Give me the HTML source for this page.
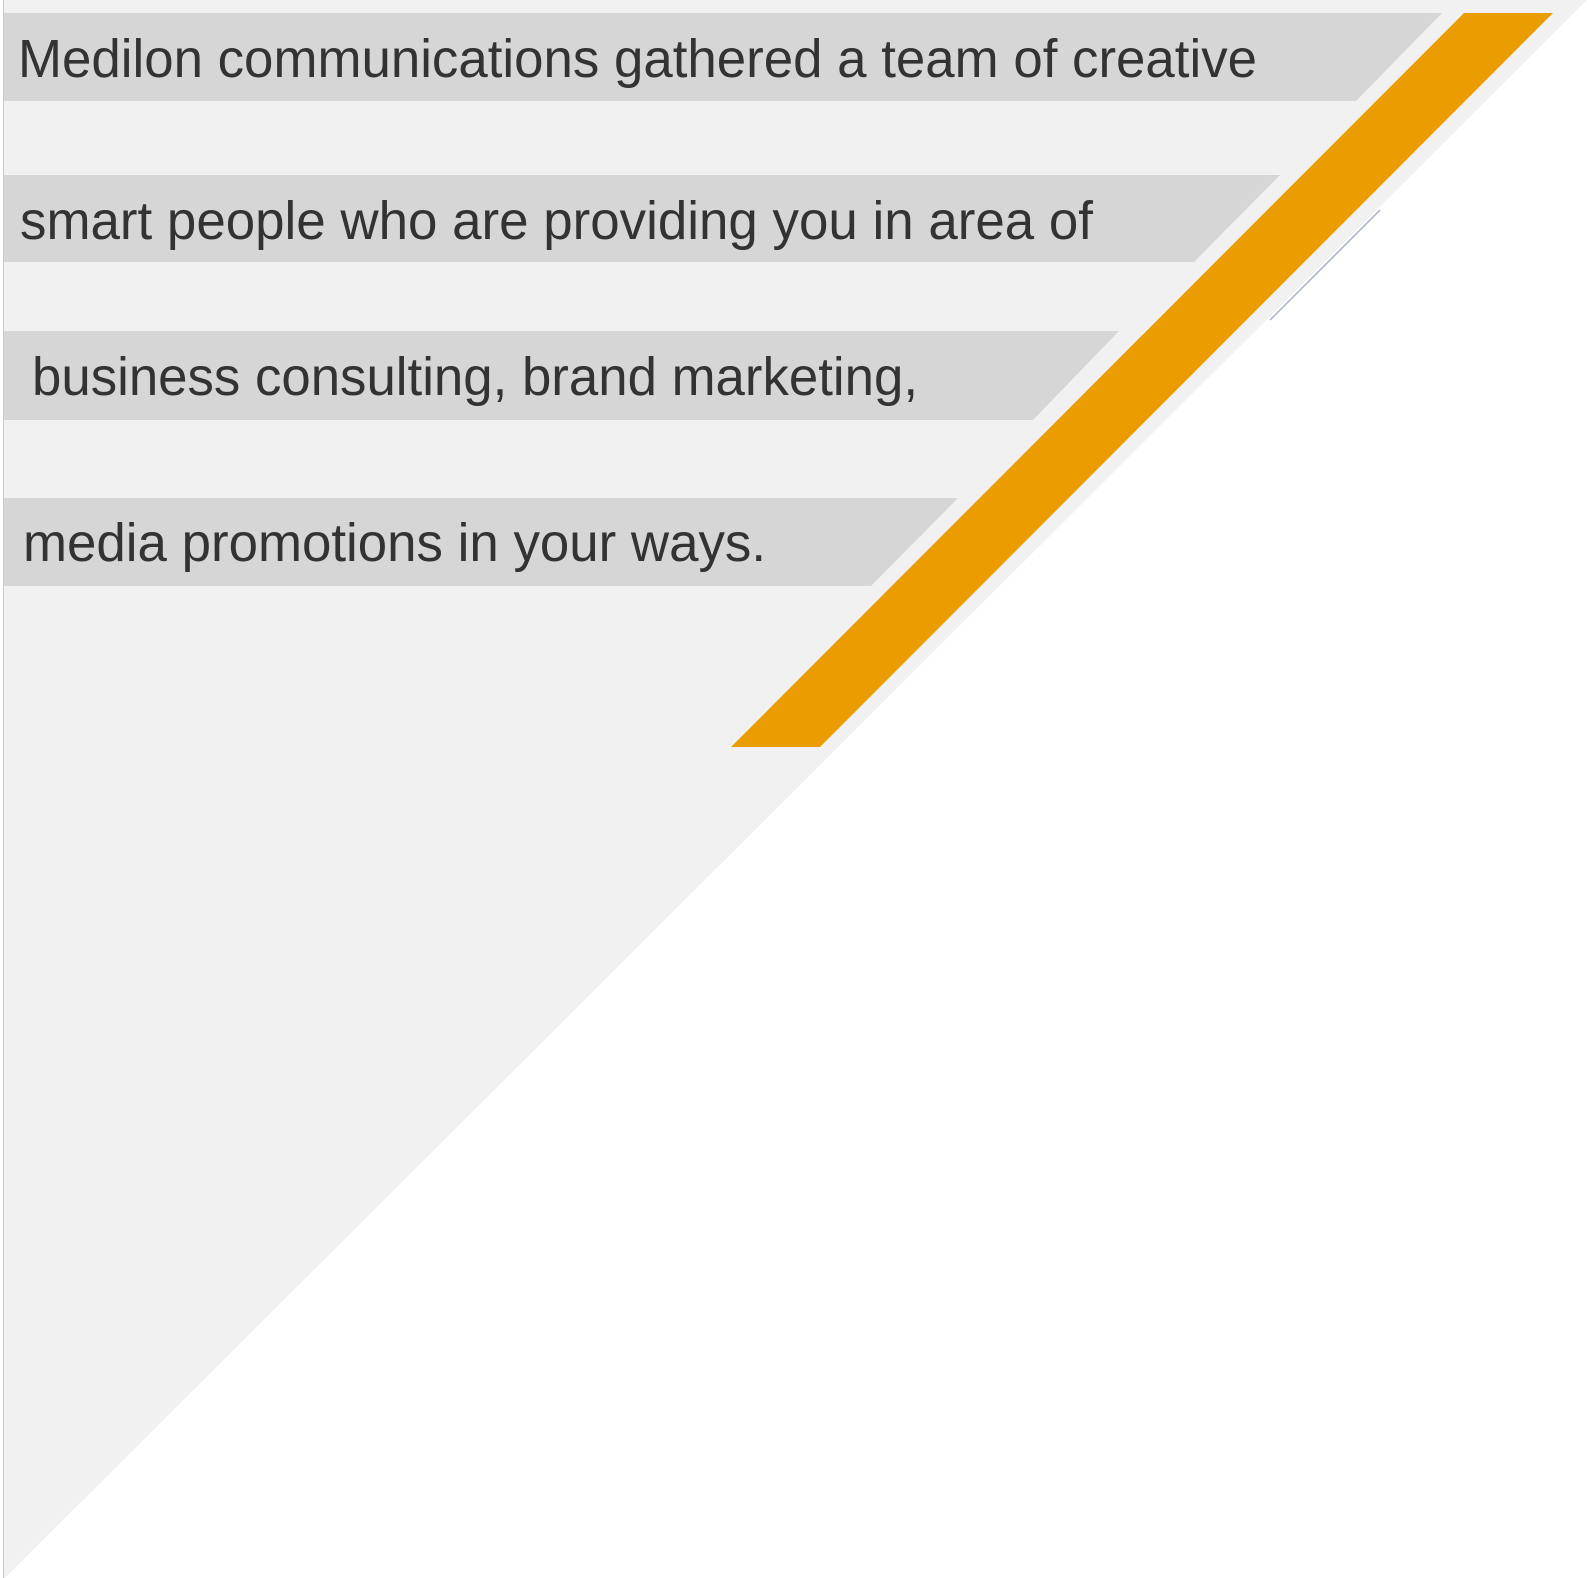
<!DOCTYPE html>
<html><head><meta charset="utf-8"><style>html,body{margin:0;padding:0;background:#fff;overflow:hidden}svg{display:block}</style></head>
<body>
<svg width="1589" height="1578" viewBox="0 0 1589 1578" xmlns="http://www.w3.org/2000/svg">
<rect width="1589" height="1578" fill="#fff"/>
<polygon points="3,0 1587,0 5,1578 3,1578" fill="#f1f1f1"/>
<line x1="3.5" y1="0" x2="3.5" y2="1578" stroke="#c8c8c8" stroke-width="1"/>
<polygon points="4,13 1442,13 1356,101 4,101" fill="#d6d6d6"/>
<polygon points="4,175 1280,175 1194,262 4,262" fill="#d6d6d6"/>
<polygon points="4,331 1119,331 1033,420 4,420" fill="#d6d6d6"/>
<polygon points="4,498 958,498 871,586 4,586" fill="#d6d6d6"/>
<line x1="1380" y1="210" x2="1270" y2="320" stroke="#a8b0c8" stroke-width="1.5"/>
<polygon points="1464,13 1553,13 820,747 731,747" fill="#eb9c00"/>
<g font-family="Liberation Sans, Arial, sans-serif" font-size="54" fill="#333">
<text x="18" y="77" textLength="1239" lengthAdjust="spacingAndGlyphs">Medilon communications gathered a team of creative</text>
<text x="20" y="239" textLength="1073" lengthAdjust="spacingAndGlyphs">smart people who are providing you in area of</text>
<text x="32" y="395" textLength="886" lengthAdjust="spacingAndGlyphs">business consulting, brand marketing,</text>
<text x="23" y="561" textLength="743" lengthAdjust="spacingAndGlyphs">media promotions in your ways.</text>
</g>
</svg>
</body></html>
